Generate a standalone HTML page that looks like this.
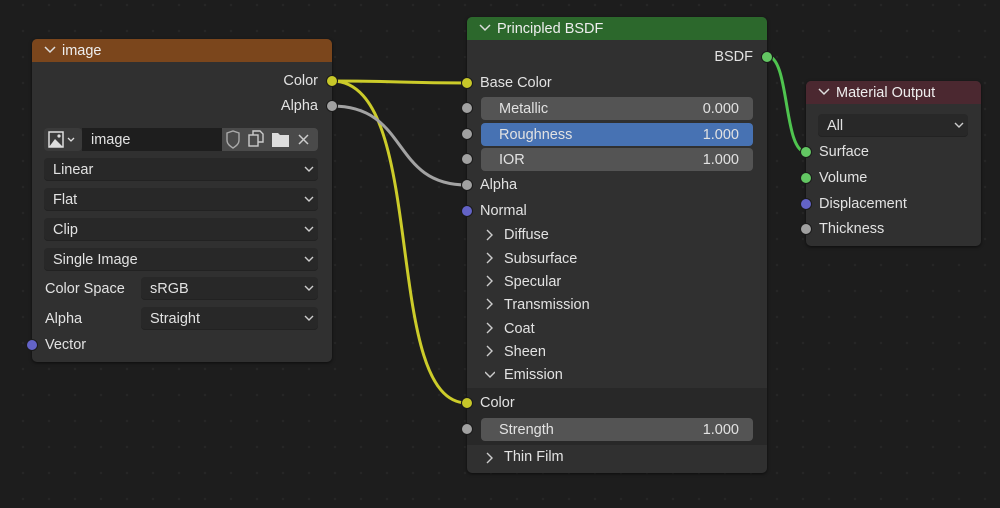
<!DOCTYPE html>
<html><head><meta charset="utf-8"><style>
*{margin:0;padding:0;box-sizing:border-box}
body{width:1000px;height:508px;overflow:hidden;background:#1d1d1d;background-image:radial-gradient(circle,#262626 1px,transparent 1.5px);background-size:26px 26px;background-position:10px 18px;font-family:"Liberation Sans",sans-serif;font-size:14.5px;color:#e2e2e2;position:relative}
.n{position:absolute;background:#303030;border-radius:5px;box-shadow:0 1px 3px rgba(0,0,0,.6);overflow:hidden}
.h{position:absolute;left:0;right:0;top:0;height:23px;color:#eee}
.h span{position:absolute;left:30px;top:4px}
.h svg{position:absolute;left:12px;top:7px}
.t{position:absolute;line-height:16px;margin-top:-8px;white-space:nowrap}
.f{position:absolute;border-radius:4px;height:23px}
.dd{background:#282828;box-shadow:inset 0 -1px 0 #222}
.fld{background:#545454}
.f .l{position:absolute;left:18px;top:4px}
.f .r{position:absolute;right:14px;top:4px}
.f .dl{position:absolute;left:9px;top:4px}
.chev{position:absolute;right:4px;top:8px}
svg.ov{position:absolute;left:0;top:0}
</style></head><body>
<svg class="ov" width="1000" height="508">
<g fill="none" stroke-width="3" stroke-linecap="round">
<path d="M332 81 C400 81 400 83 467 83" stroke="#cccc2a"/>
<path d="M332 81 C430 81 380 403 467 403" stroke="#cccc2a"/>
<path d="M332 106 C410 106 390 185 467 185" stroke="#a3a3a3"/>
<path d="M767 56 C790 56 783 152 806 152" stroke="#4fc44f"/>
</g></svg>

<div class="n" style="left:32px;top:39px;width:300px;height:323px">
<div class="h" style="background:#7b461c"><svg width="12" height="8"><polyline points="1,1 6,6 11,1" fill="none" stroke="#ddd" stroke-width="1.5"/></svg><span>image</span></div>
<div class="t" style="right:14px;top:42px">Color</div>
<div class="t" style="right:14px;top:67px">Alpha</div>
<div class="f" style="left:12px;top:89px;width:38px;background:#3a3a3a">
<svg width="38" height="23"><rect x="5" y="4" width="14" height="15" fill="none" stroke="#ddd" stroke-width="1.5"/><polygon points="5,19 11,11 19,19" fill="#ddd"/><circle cx="15" cy="8" r="1.6" fill="#ddd"/><polyline points="24,10 27,13 30,10" fill="none" stroke="#ddd" stroke-width="1.3"/></svg></div>
<div class="f" style="left:50px;top:89px;width:140px;background:#1e1e1e;border-radius:0"><span class="dl">image</span></div>
<div class="f" style="left:190px;top:89px;width:96px;background:#4a4a4a;border-radius:0 4px 4px 0">
<svg width="96" height="23"><path d="M5 5 L11 3 L17 5 L17 12 C17 16 14 18 11 20 C8 18 5 16 5 12 Z" fill="none" stroke="#aaa" stroke-width="1.4"/><rect x="27" y="7" width="9" height="11" fill="none" stroke="#ccc" stroke-width="1.4"/><path d="M31 7 V3 H38 L41 6 V14 H36" fill="none" stroke="#ccc" stroke-width="1.4"/><path d="M50 5 H56 L58 7 H67 V19 H50 Z" fill="#ddd"/><path d="M77 7 L86 16 M86 7 L77 16" stroke="#ccc" stroke-width="1.5"/></svg></div>
<div class="f dd" style="left:12px;top:119px;width:274px"><span class="dl">Linear</span><svg class="chev" width="10" height="7"><polyline points="1,1 5,5 9,1" fill="none" stroke="#ccc" stroke-width="1.4"/></svg></div>
<div class="f dd" style="left:12px;top:149px;width:274px"><span class="dl">Flat</span><svg class="chev" width="10" height="7"><polyline points="1,1 5,5 9,1" fill="none" stroke="#ccc" stroke-width="1.4"/></svg></div>
<div class="f dd" style="left:12px;top:179px;width:274px"><span class="dl">Clip</span><svg class="chev" width="10" height="7"><polyline points="1,1 5,5 9,1" fill="none" stroke="#ccc" stroke-width="1.4"/></svg></div>
<div class="f dd" style="left:12px;top:209px;width:274px"><span class="dl">Single Image</span><svg class="chev" width="10" height="7"><polyline points="1,1 5,5 9,1" fill="none" stroke="#ccc" stroke-width="1.4"/></svg></div>
<div class="t" style="left:13px;top:250px">Color Space</div>
<div class="f dd" style="left:109px;top:238px;width:177px"><span class="dl">sRGB</span><svg class="chev" width="10" height="7"><polyline points="1,1 5,5 9,1" fill="none" stroke="#ccc" stroke-width="1.4"/></svg></div>
<div class="t" style="left:13px;top:280px">Alpha</div>
<div class="f dd" style="left:109px;top:268px;width:177px"><span class="dl">Straight</span><svg class="chev" width="10" height="7"><polyline points="1,1 5,5 9,1" fill="none" stroke="#ccc" stroke-width="1.4"/></svg></div>
<div class="t" style="left:13px;top:306px">Vector</div>
</div>

<div class="n" style="left:467px;top:17px;width:300px;height:456px">
<div class="h" style="background:#2c682c"><svg width="12" height="8"><polyline points="1,1 6,6 11,1" fill="none" stroke="#ddd" stroke-width="1.5"/></svg><span>Principled BSDF</span></div>
<div class="t" style="right:14px;top:40px">BSDF</div>
<div class="t" style="left:13px;top:66px">Base Color</div>
<div class="f fld" style="left:14px;top:80px;width:272px"><span class="l">Metallic</span><span class="r">0.000</span></div>
<div class="f" style="left:14px;top:106px;width:272px;background:#4772b3"><span class="l">Roughness</span><span class="r">1.000</span></div>
<div class="f fld" style="left:14px;top:131px;width:272px"><span class="l">IOR</span><span class="r">1.000</span></div>
<div class="t" style="left:13px;top:168px">Alpha</div>
<div class="t" style="left:13px;top:194px">Normal</div>
<svg style="position:absolute;left:18px;top:211px" width="10" height="160"><g fill="none" stroke="#ccc" stroke-width="1.4"><polyline points="2,2 7,7 2,12"/><polyline points="2,25 7,30 2,35"/><polyline points="2,48 7,53 2,58"/><polyline points="2,71 7,76 2,81"/><polyline points="2,95 7,100 2,105"/><polyline points="2,118 7,123 2,128"/><polyline points="0,144 5,149 10,144"/></g></svg>
<div class="t" style="left:37px;top:218px">Diffuse</div>
<div class="t" style="left:37px;top:242px">Subsurface</div>
<div class="t" style="left:37px;top:265px">Specular</div>
<div class="t" style="left:37px;top:288px">Transmission</div>
<div class="t" style="left:37px;top:312px">Coat</div>
<div class="t" style="left:37px;top:335px">Sheen</div>
<div class="t" style="left:37px;top:358px">Emission</div>
<div style="position:absolute;left:0;right:0;top:371px;height:57px;background:#282828"></div>
<div class="t" style="left:13px;top:386px">Color</div>
<div class="f fld" style="left:14px;top:401px;width:272px"><span class="l">Strength</span><span class="r">1.000</span></div>
<svg style="position:absolute;left:18px;top:434px" width="10" height="14"><polyline points="2,2 7,7 2,12" fill="none" stroke="#ccc" stroke-width="1.4"/></svg>
<div class="t" style="left:37px;top:440px">Thin Film</div>
</div>

<div class="n" style="left:806px;top:81px;width:175px;height:165px">
<div class="h" style="background:#4b2830"><svg width="12" height="8"><polyline points="1,1 6,6 11,1" fill="none" stroke="#ddd" stroke-width="1.5"/></svg><span>Material Output</span></div>
<div class="f dd" style="left:12px;top:33px;width:150px"><span class="dl">All</span><svg class="chev" width="10" height="7"><polyline points="1,1 5,5 9,1" fill="none" stroke="#ccc" stroke-width="1.4"/></svg></div>
<div class="t" style="left:13px;top:71px">Surface</div>
<div class="t" style="left:13px;top:97px">Volume</div>
<div class="t" style="left:13px;top:123px">Displacement</div>
<div class="t" style="left:13px;top:148px">Thickness</div>
</div>

<svg class="ov" width="1000" height="508"><g stroke="#1a1a1a" stroke-width="1">
<circle cx="332" cy="81" r="5.5" fill="#c7c729"/>
<circle cx="332" cy="106" r="5.5" fill="#a1a1a1"/>
<circle cx="32" cy="345" r="5.5" fill="#6363c7"/>
<circle cx="767" cy="57" r="5.5" fill="#63c763"/>
<circle cx="467" cy="83" r="5.5" fill="#c7c729"/>
<circle cx="467" cy="108" r="5.5" fill="#a1a1a1"/>
<circle cx="467" cy="134" r="5.5" fill="#a1a1a1"/>
<circle cx="467" cy="159" r="5.5" fill="#a1a1a1"/>
<circle cx="467" cy="185" r="5.5" fill="#a1a1a1"/>
<circle cx="467" cy="211" r="5.5" fill="#6363c7"/>
<circle cx="467" cy="403" r="5.5" fill="#c7c729"/>
<circle cx="467" cy="429" r="5.5" fill="#a1a1a1"/>
<circle cx="806" cy="152" r="5.5" fill="#63c763"/>
<circle cx="806" cy="178" r="5.5" fill="#63c763"/>
<circle cx="806" cy="204" r="5.5" fill="#6363c7"/>
<circle cx="806" cy="229" r="5.5" fill="#a1a1a1"/>
</g></svg>
</body></html>
